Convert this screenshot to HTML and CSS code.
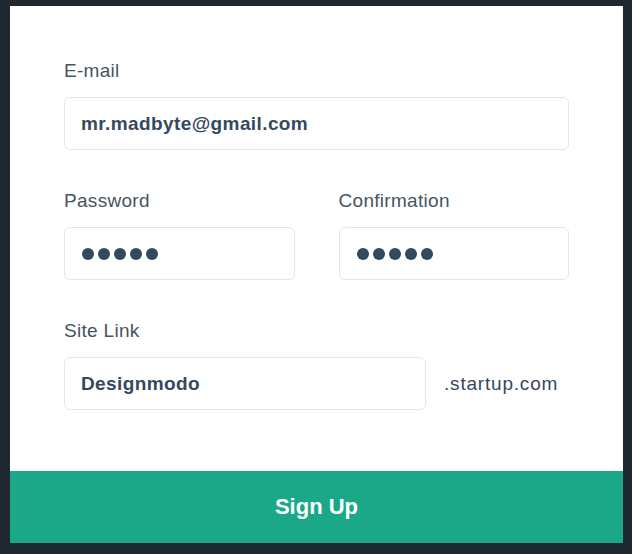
FILE: index.html
```html
<!DOCTYPE html>
<html lang="en">
<head>
<meta charset="utf-8">
<title>Sign Up</title>
<link rel="stylesheet" href="styles.css">
</head>
<body>
<div class="card">
  <form class="form">
    <div class="field">
      <label class="label">E-mail</label>
      <div class="input"><span class="value">mr.madbyte@gmail.com</span></div>
    </div>
    <div class="row-2">
      <div class="field">
        <label class="label">Password</label>
        <div class="input"><span class="dots"><i></i><i></i><i></i><i></i><i></i></span></div>
      </div>
      <div class="field">
        <label class="label">Confirmation</label>
        <div class="input"><span class="dots"><i></i><i></i><i></i><i></i><i></i></span></div>
      </div>
    </div>
    <div class="field">
      <label class="label">Site Link</label>
      <div class="site-row">
        <div class="input site-input"><span class="value">Designmodo</span></div>
        <span class="suffix">.startup.com</span>
      </div>
    </div>
  </form>
  <button class="signup" type="button">Sign Up</button>
</div>
</body>
</html>
```

FILE: styles.css
```css
html, body {
  margin: 0;
  padding: 0;
}
body {
  background: #1f2830;
  width: 632px;
  height: 554px;
  overflow: hidden;
  font-family: "Liberation Sans", Arial, Helvetica, sans-serif;
}
.card {
  margin: 6px 0 0 10px;
  width: 613px;
  height: 537px;
  background: #ffffff;
  display: flex;
  flex-direction: column;
}
.form {
  flex: 1;
  padding: 54px 54px 0 54px;
  display: flex;
  flex-direction: column;
  gap: 40px;
}
.field {
  display: flex;
  flex-direction: column;
  gap: 15px;
}
.label {
  font-size: 19px;
  line-height: 22px;
  letter-spacing: 0.3px;
  color: #465463;
}
.input {
  box-sizing: border-box;
  height: 53px;
  border: 1px solid #e3e7ea;
  border-radius: 6px;
  padding: 0 16px;
  display: flex;
  align-items: center;
  background: #fff;
}
.value {
  font-size: 19px;
  font-weight: bold;
  letter-spacing: 0.4px;
  color: #34495e;
}
.row-2 {
  display: grid;
  grid-template-columns: 1fr 1fr;
  column-gap: 44px;
}
.dots {
  display: flex;
  gap: 4px;
  padding-left: 1px;
}
.dots i {
  display: block;
  width: 12px;
  height: 12px;
  border-radius: 50%;
  background: #34495e;
}
.site-row {
  display: flex;
  align-items: center;
  gap: 18px;
}
.site-input {
  width: 362px;
}
.suffix {
  font-size: 19px;
  letter-spacing: 0.8px;
  color: #34495e;
  padding-top: 1px;
}
.signup {
  height: 72px;
  border: 0;
  margin: 0;
  padding: 0;
  background: #1aa889;
  color: #ffffff;
  font-family: "Liberation Sans", Arial, Helvetica, sans-serif;
  font-size: 22px;
  font-weight: bold;
  width: 100%;
  cursor: pointer;
}
```
